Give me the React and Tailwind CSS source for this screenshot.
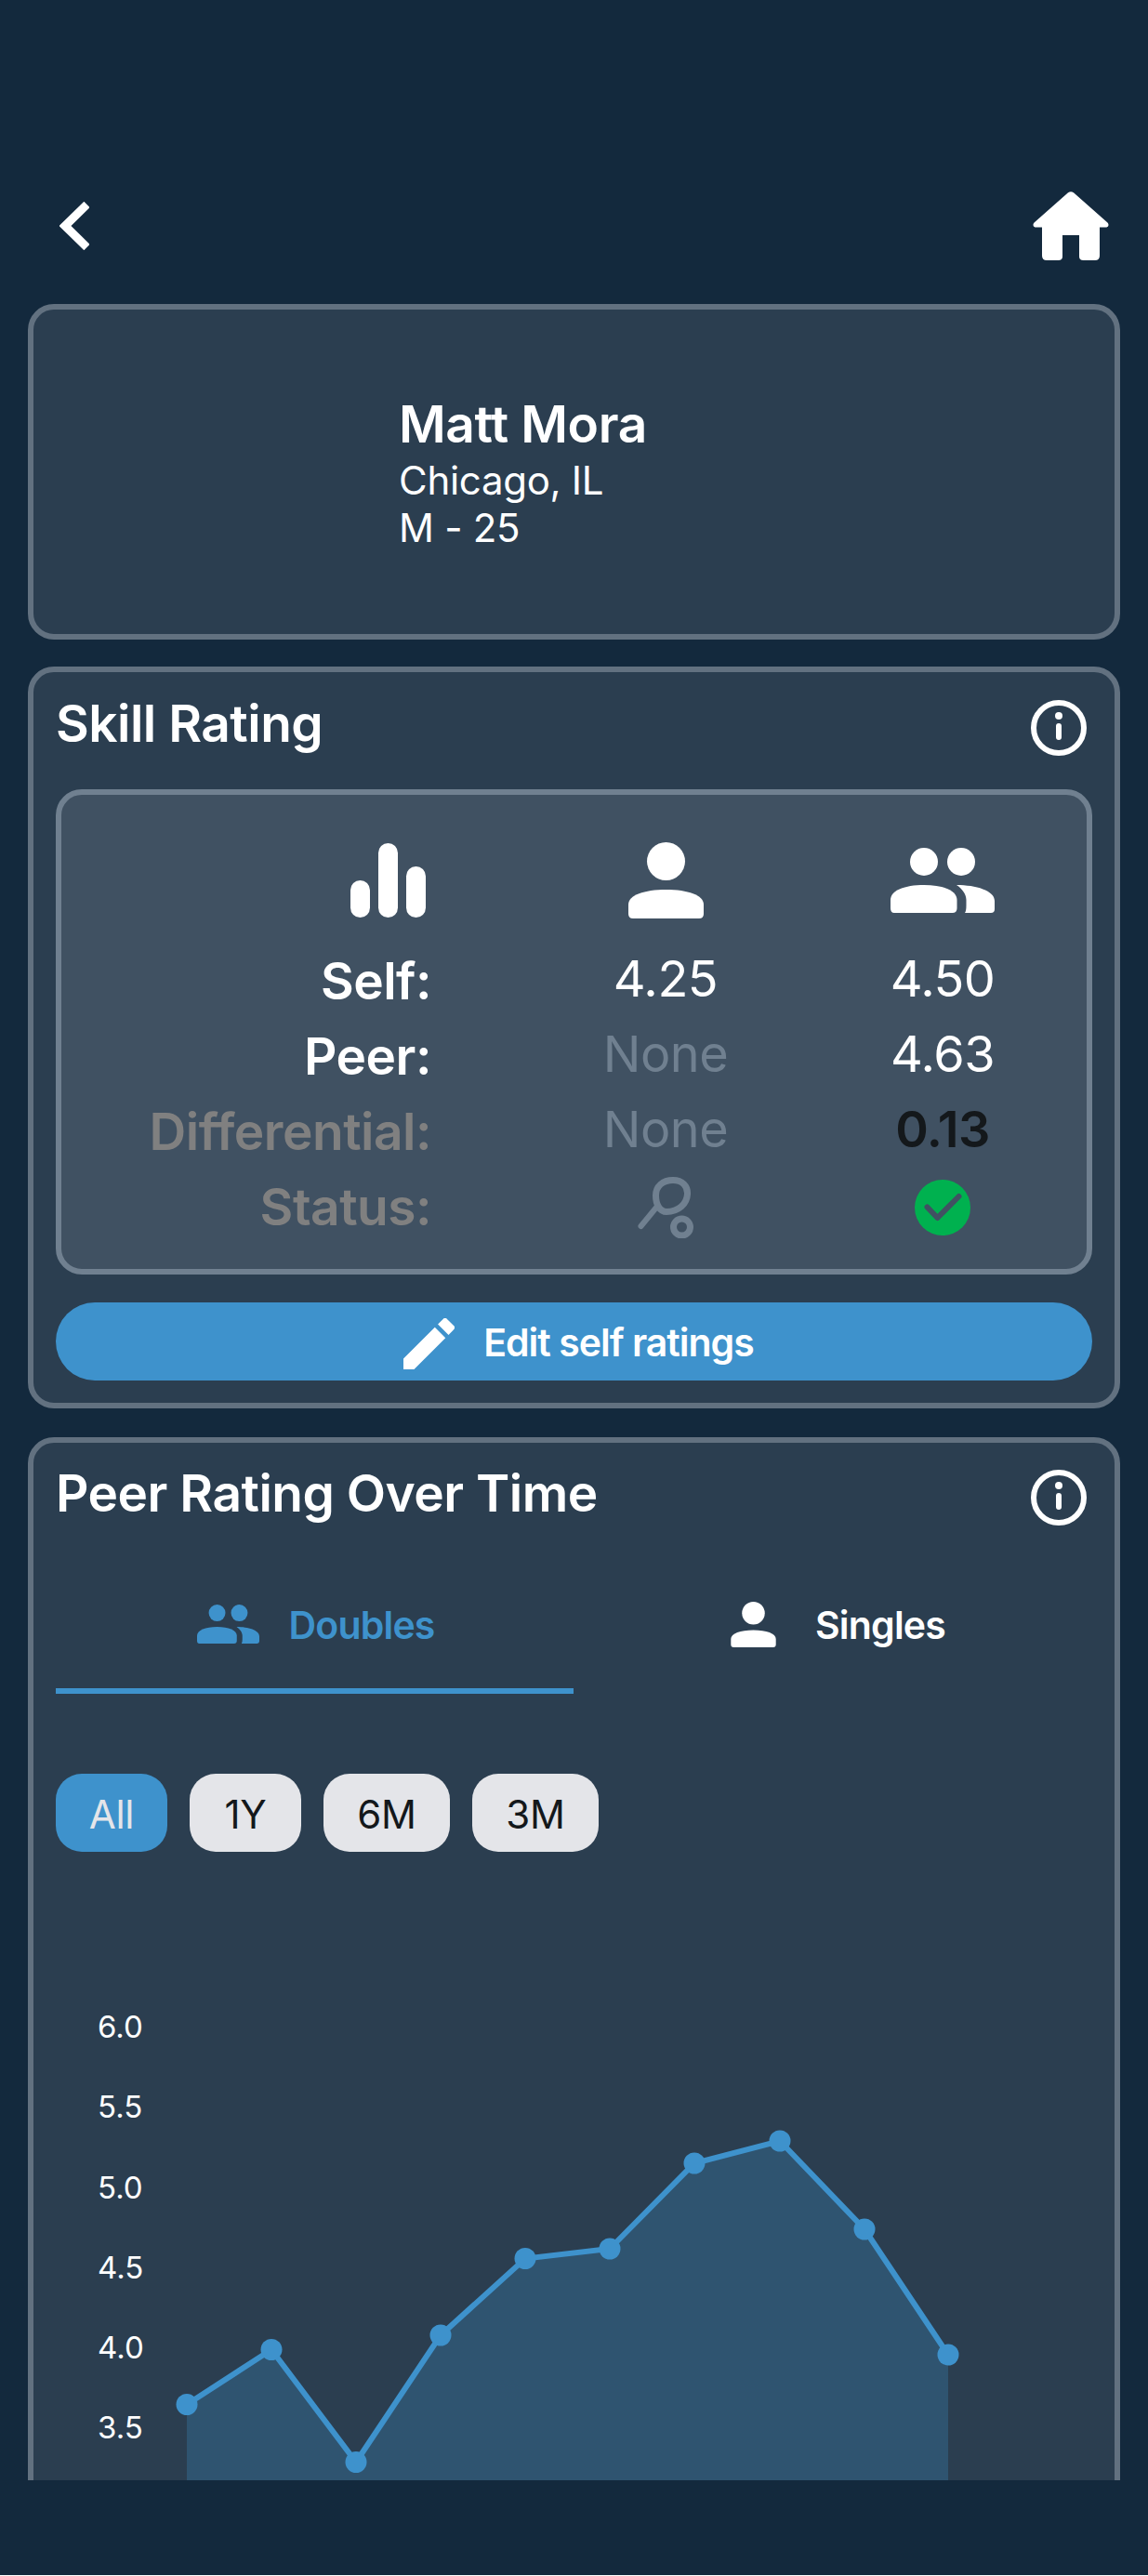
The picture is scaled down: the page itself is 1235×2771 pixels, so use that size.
import React from "react";

const points = [
  [201, 2586.5],
  [292, 2527.5],
  [383, 2648.5],
  [474, 2512],
  [565, 2429.5],
  [656, 2419],
  [747, 2327],
  [839, 2303],
  [930, 2398],
  [1020, 2533],
];

const yLabels = [
  ["6.0", 2180],
  ["5.5", 2266],
  ["5.0", 2353],
  ["4.5", 2439],
  ["4.0", 2525],
  ["3.5", 2611],
];

const Person = ({ className, fill = "#ffffff" }) => (
  <svg viewBox="0 0 81 82" className={className} fill={fill}>
    <circle cx="40.5" cy="20.5" r="20.5" />
    <path d="M0 67C0 57 17 51 40.5 51C64 51 81 57 81 67V77Q81 82 76 82H5Q0 82 0 77Z" />
  </svg>
);

const Group = ({ className, fill = "#ffffff" }) => (
  <svg viewBox="0 0 112 70" className={className} fill={fill}>
    <circle cx="36" cy="15" r="15" />
    <circle cx="76" cy="15" r="15" />
    <path d="M0 56C0 46 15 40 36 40C57 40 71.5 46 71.5 56V65Q71.5 70 66.5 70H4Q0 70 0 65Z" />
    <path d="M71 40C92 40 112 46 112 57V66Q112 70 108 70H80Q81.5 68 81.5 62V56C81.5 50 77 44 71 40Z" />
  </svg>
);

const InfoIcon = () => (
  <svg viewBox="0 0 60 60" className="w-[60px] h-[60px] shrink-0" fill="none">
    <circle cx="30" cy="30" r="27" stroke="#ffffff" strokeWidth="6" />
    <circle cx="30" cy="17" r="4" fill="#ffffff" />
    <rect x="27" y="25" width="6" height="18" rx="3" fill="#ffffff" />
  </svg>
);

const Bars = () => (
  <svg viewBox="0 0 81 80" className="w-[81px] h-[80px]" fill="#ffffff">
    <rect x="0" y="40" width="21" height="40" rx="10.5" />
    <rect x="30" y="0" width="21" height="80" rx="10.5" />
    <rect x="60" y="25" width="21" height="55" rx="10.5" />
  </svg>
);

const Racket = () => (
  <svg viewBox="0 0 60 66" className="w-[60px] h-[66px]" fill="none" stroke="#708090" strokeWidth="7" strokeLinecap="round">
    <path d="M19.5 20C19.5 10 27 3.5 38 3.5C48 3.5 54 10 53.5 18.5C53 29 44 37.5 31 37.5C24 37.5 19.5 30 19.5 20Z" />
    <path d="M19.5 33.5L3.5 53" strokeWidth="6" />
    <circle cx="47.5" cy="54" r="9" />
  </svg>
);

const CheckBadge = () => (
  <svg viewBox="0 0 60 60" className="w-[60px] h-[60px]" fill="none">
    <circle cx="30" cy="30" r="30" fill="#00b14f" />
    <path d="M13.5 29.5L24.5 41L47.5 18" stroke="#405162" strokeWidth="6" strokeLinecap="round" strokeLinejoin="round" />
  </svg>
);

const Card = ({ className = "", children }) => (
  <div className={`mx-[30px] border-[6px] border-[#627180] rounded-[28px] bg-[#2b3e50] ${className}`}>
    {children}
  </div>
);

const CardTitle = ({ children }) => (
  <div className="flex items-center justify-between h-[60px] pr-[6px]">
    <h2 className="pb-[10px] text-[55px] leading-[50px] font-semibold text-white tracking-[-0.5px]">{children}</h2>
    <InfoIcon />
  </div>
);

const Label = ({ children, muted }) => (
  <div className={`pr-[103px] pt-[1px] h-[81px] leading-[78px] text-right text-[55px] font-semibold tracking-[-0.5px] ${muted ? "text-[#808080]" : "text-white"}`}>
    {children}
  </div>
);

const Value = ({ children, className = "text-white" }) => (
  <div className={`h-[81px] leading-[76px] text-center text-[54px] tracking-[-0.5px] ${className}`}>{children}</div>
);

const Pill = ({ children, active, className = "" }) => (
  <button
    className={`h-[84px] pt-[2px] rounded-[28px] text-[42px] tracking-[-0.3px] ${active ? "bg-[#3e92cc] text-[#e4e5e9]" : "bg-[#e4e5e9] text-[#14181b]"} ${className}`}
  >
    {children}
  </button>
);

const App = () => {
  const line = points.map((p) => p.join(",")).join(" ");
  const area = `201,2800 ${line} 1020,2800`;

  return (
    <div className="h-[2770px] bg-[#13293d] [font-family:Inter,sans-serif]">
      <div className="h-[2668px] overflow-hidden">
        {/* Header */}
        <div className="pt-[206px] pl-[64px] pr-[42.5px] flex items-center justify-between h-[280px] mb-[47px]">
          <svg viewBox="0 0 32 52" className="w-[32px] h-[52px]" fill="none">
            <path d="M29.5 3L6 26L29.5 49" stroke="#ffffff" strokeWidth="9" />
          </svg>
          <svg viewBox="0 0 82 74" className="w-[82px] h-[74px]" fill="#ffffff">
            <path d="M38 1.2Q41 -0.8 44 1.2L80.5 33.5Q83 37 79.5 38.5H72V69Q72 74 67 74H54.5Q50 74 50 70V47H32V70Q32 74 27.5 74H15Q10 74 10 69V38.5H2.5Q-1 37 1.5 33.5Z" />
          </svg>
        </div>

        {/* Profile */}
        <Card className="h-[361px] flex items-center pl-[393px]">
          <div className="text-white pt-[2px]">
            <div className="text-[55px] leading-[62px] font-semibold mb-[4px] tracking-[-0.4px]">Matt Mora</div>
            <div className="text-[42px] leading-[51px] tracking-[-0.3px]">Chicago, IL</div>
            <div className="text-[42px] leading-[51px] tracking-[-0.3px]">M - 25</div>
          </div>
        </Card>

        {/* Skill rating */}
        <Card className="mt-[29px] h-[798px] px-[24px] pt-[30px]">
          <CardTitle>Skill Rating</CardTitle>
          <div className="mt-[36px] h-[522px] border-[6px] border-[#708090] rounded-[28px] bg-[#405162] pt-[42px]">
            <div className="grid grid-cols-[501px_298px_298px]">
              <div className="h-[100px] mb-[18px] pr-[109px] flex items-center justify-end">
                <Bars />
              </div>
              <div className="h-[100px] mb-[18px] flex items-center justify-center">
                <Person className="w-[81px] h-[82px]" />
              </div>
              <div className="h-[100px] mb-[18px] flex items-center justify-center">
                <Group className="w-[112px] h-[70px]" />
              </div>

              <Label>Self:</Label>
              <Value>4.25</Value>
              <Value>4.50</Value>

              <Label>Peer:</Label>
              <Value className="text-[#708090]">None</Value>
              <Value>4.63</Value>

              <Label muted>Differential:</Label>
              <Value className="text-[#708090]">None</Value>
              <Value className="text-[#14181b] font-semibold">0.13</Value>

              <Label muted>Status:</Label>
              <div className="h-[81px] flex items-center justify-center">
                <Racket />
              </div>
              <div className="h-[81px] flex items-center justify-center">
                <CheckBadge />
              </div>
            </div>
          </div>
          <button className="mt-[30px] w-full h-[84px] rounded-full bg-[#3e92cc] flex items-center justify-center gap-[31px] pl-[10px] pt-[4px]">
            <svg viewBox="3 3 18 18" className="w-[55px] h-[55px]" fill="#ffffff">
              <path d="M3 17.25V21h3.75L17.81 9.94l-3.75-3.75L3 17.25zM20.71 7.04a.996.996 0 000-1.41l-2.34-2.34a.996.996 0 00-1.41 0l-1.83 1.83 3.75 3.75 1.83-1.83z" />
            </svg>
            <span className="text-[41px] font-semibold text-white tracking-[-1px]">Edit self ratings</span>
          </button>
        </Card>

        {/* Peer rating chart */}
        <Card className="mt-[31px] h-[1300px] px-[24px] pt-[29px]">
          <CardTitle>Peer Rating Over Time</CardTitle>
          <div className="mt-[39px] flex">
            <div className="w-[557px] h-[142px] border-b-[6px] border-[#3e92cc] pb-[2px] pl-[3px] flex items-center justify-center gap-[31px]">
              <Group className="w-[67px] h-[42px]" fill="#3e92cc" />
              <span className="pt-[3px] text-[41px] font-semibold text-[#3e92cc] tracking-[-0.8px]">Doubles</span>
            </div>
            <div className="w-[557px] h-[142px] border-b-[6px] border-transparent pb-[2px] pl-[12px] flex items-center justify-center gap-[42px]">
              <Person className="w-[49px] h-[49px]" />
              <span className="pt-[3px] text-[41px] font-semibold text-white tracking-[-0.8px]">Singles</span>
            </div>
          </div>
          <div className="mt-[86px] flex gap-[24px]">
            <Pill active className="w-[120px]">All</Pill>
            <Pill className="w-[120px]">1Y</Pill>
            <Pill className="w-[136px]">6M</Pill>
            <Pill className="w-[136px]">3M</Pill>
          </div>
          <svg viewBox="60 2100 1114 700" className="mt-[108px] w-[1114px] h-[700px] block">
            {yLabels.map(([label, y]) => (
              <text key={label} x="105" y={y + 12} fontSize="33" fill="#ffffff" fontFamily="Inter, sans-serif">
                {label}
              </text>
            ))}
            <polygon points={area} fill="#3e92cc" fillOpacity="0.26" />
            <polyline points={line} fill="none" stroke="#3e92cc" strokeWidth="6" />
            {points.map(([x, y]) => (
              <circle key={x} cx={x} cy={y} r="11.5" fill="#3e92cc" />
            ))}
          </svg>
        </Card>
      </div>
    </div>
  );
};

export default App;
